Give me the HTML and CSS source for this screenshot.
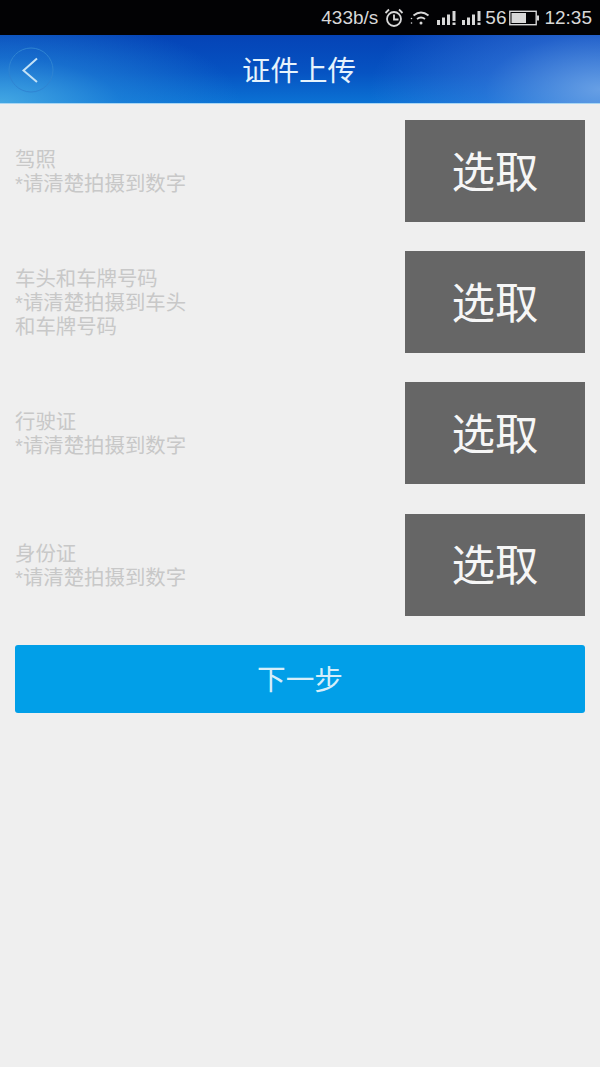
FILE: index.html
```html
<!DOCTYPE html>
<html>
<head>
	<meta charset="utf-8">
	<meta name="viewport" content="width=device-width, initial-scale=1">
	<title>证件上传</title>
	<link rel="stylesheet" href="styles.css">
</head>
<body>
	<div class="status-bar">
		<span class="speed">433b/s</span>
		<svg class="icon-alarm" width="20" height="20" viewBox="0 0 20 20">
			<circle cx="10" cy="11" r="7"/>
			<path d="M10 6.500v5h4.500M1.500 5L5 1.500M18.500 5L15 1.500"/>
		</svg>
		<svg class="icon-wifi" width="22" height="18" viewBox="0 0 22 18">
			<path d="M3.500 6.500Q11 0.500 18.500 6.500M7 10Q11 7 15 10"/>
			<circle cx="11" cy="14" r="1.500"/>
			<circle cx="1.500" cy="14" r="0.800"/>
			<circle cx="1.500" cy="9.500" r="0.800"/>
		</svg>
		<svg class="icon-signal" width="21" height="16" viewBox="0 0 21 16">
			<path d="M1 10h3v5H1zM6 7.500h3V15H6zM11 4.500h3V15h-3zM16.500 1h3v10h-3zM16.500 12.500h3V15h-3z"/>
		</svg>
		<svg class="icon-signal" width="21" height="16" viewBox="0 0 21 16">
			<path d="M1 10h3v5H1zM6 7.500h3V15H6zM11 4.500h3V15h-3zM16.500 1h3v10h-3zM16.500 12.500h3V15h-3z"/>
		</svg>
		<span class="net">56</span>
		<svg class="icon-battery" width="30" height="18" viewBox="0 0 30 18">
			<rect class="battery-box" x="0.800" y="2.300" width="26.400" height="13.400"/>
			<rect class="battery-fill" x="2.500" y="4" width="14.500" height="10"/>
			<rect class="battery-fill" x="28" y="6.500" width="2" height="5"/>
		</svg>
		<span>12:35</span>
	</div>
	<header class="title-bar">
		<button class="back">
			<svg width="46" height="46" viewBox="0 0 46 46">
				<circle cx="23" cy="23" r="22"/>
				<path d="M29 11.500L15.500 23.500L29 35"/>
			</svg>
		</button>
		<h1>证件上传</h1>
	</header>
	<div class="container">
		<div class="doc-row">
			<div class="doc-text">
				<p>驾照</p>
				<p>*请清楚拍摄到数字</p>
			</div>
			<button class="pick">选取</button>
		</div>
		<div class="doc-row">
			<div class="doc-text">
				<p>车头和车牌号码</p>
				<p>*请清楚拍摄到车头<br>和车牌号码</p>
			</div>
			<button class="pick">选取</button>
		</div>
		<div class="doc-row">
			<div class="doc-text">
				<p>行驶证</p>
				<p>*请清楚拍摄到数字</p>
			</div>
			<button class="pick">选取</button>
		</div>
		<div class="doc-row">
			<div class="doc-text">
				<p>身份证</p>
				<p>*请清楚拍摄到数字</p>
			</div>
			<button class="pick">选取</button>
		</div>
		<button class="next">下一步</button>
	</div>
</body>
</html>
```

FILE: styles.css
```css
html, body {
	height: 100%;
}
body {
	margin: 0;
	padding: 0;
	background-color: #efefef;
	font-family: "Liberation Sans", "Noto Sans CJK SC", sans-serif;
	overflow: hidden;
}
.status-bar {
	height: 35px;
	background-color: #020204;
	color: #d8d8d8;
	font-family: "Liberation Sans", sans-serif;
	font-size: 19px;
	display: flex;
	align-items: center;
	justify-content: flex-end;
	gap: 4px;
	padding-right: 8px;
}
.status-bar svg {
	flex: none;
}
.speed {
	margin-right: 2px;
}
.icon-alarm, .icon-wifi {
	fill: none;
	stroke: #d8d8d8;
	stroke-width: 1.800;
}
.icon-alarm {
	margin-right: 2px;
}
.icon-wifi circle {
	fill: #d8d8d8;
	stroke: none;
}
.icon-signal {
	fill: #d8d8d8;
}
.net {
	margin-left: -1px;
	margin-right: 1px;
}
.icon-battery {
	margin: 0 1px 0 -2px;
}
.battery-box {
	fill: none;
	stroke: #d8d8d8;
	stroke-width: 1.400;
}
.battery-fill {
	fill: #d8d8d8;
}
.title-bar {
	height: 69px;
	box-sizing: border-box;
	border-bottom: 1px solid #a9d6f3;
	background:
		radial-gradient(ellipse 240px 90px at 0 100%, rgba(70, 170, 228, 0.95) 0%, rgba(40, 140, 220, 0.5) 50%, rgba(40, 140, 220, 0) 100%),
		radial-gradient(ellipse 230px 110px at 100% 80%, rgba(108, 162, 230, 0.95) 0%, rgba(70, 130, 225, 0.45) 50%, rgba(70, 130, 225, 0) 100%),
		linear-gradient(180deg, #0543b6 0%, #0653c2 55%, #0b72d4 100%);
	display: flex;
	align-items: center;
	justify-content: center;
	position: relative;
}
.title-bar h1 {
	margin: 0 0 1px -2px;
	color: #e6f3fc;
	font-size: 28.500px;
	font-weight: normal;
}
.back {
	position: absolute;
	left: 8px;
	top: 12px;
	padding: 0;
	border: none;
	background: none;
	width: 46px;
	height: 46px;
}
.back circle {
	fill: none;
	stroke: #2f84d2;
	stroke-width: 1;
}
.back path {
	fill: none;
	stroke: #c4e2f6;
	stroke-width: 2;
}
.container {
	padding: 16px 15px 0;
}
.doc-row {
	display: flex;
	align-items: center;
	justify-content: space-between;
	height: 102px;
	margin-bottom: 29.200px;
}
.doc-text {
	color: #c8c8c8;
	font-size: 20.400px;
	line-height: 24px;
	padding-top: 2px;
}
.doc-text p {
	margin: 0;
}
.pick {
	width: 180px;
	height: 102px;
	border: none;
	padding: 0 0 4px;
	background-color: #666666;
	color: #f6f6f6;
	font-family: inherit;
	font-size: 43.500px;
}
.next {
	display: block;
	width: 100%;
	height: 68px;
	border: none;
	border-radius: 3px;
	background-color: #019fe8;
	color: #d5eefa;
	font-family: inherit;
	font-size: 28.700px;
	padding: 0 0 2px;
}
```
